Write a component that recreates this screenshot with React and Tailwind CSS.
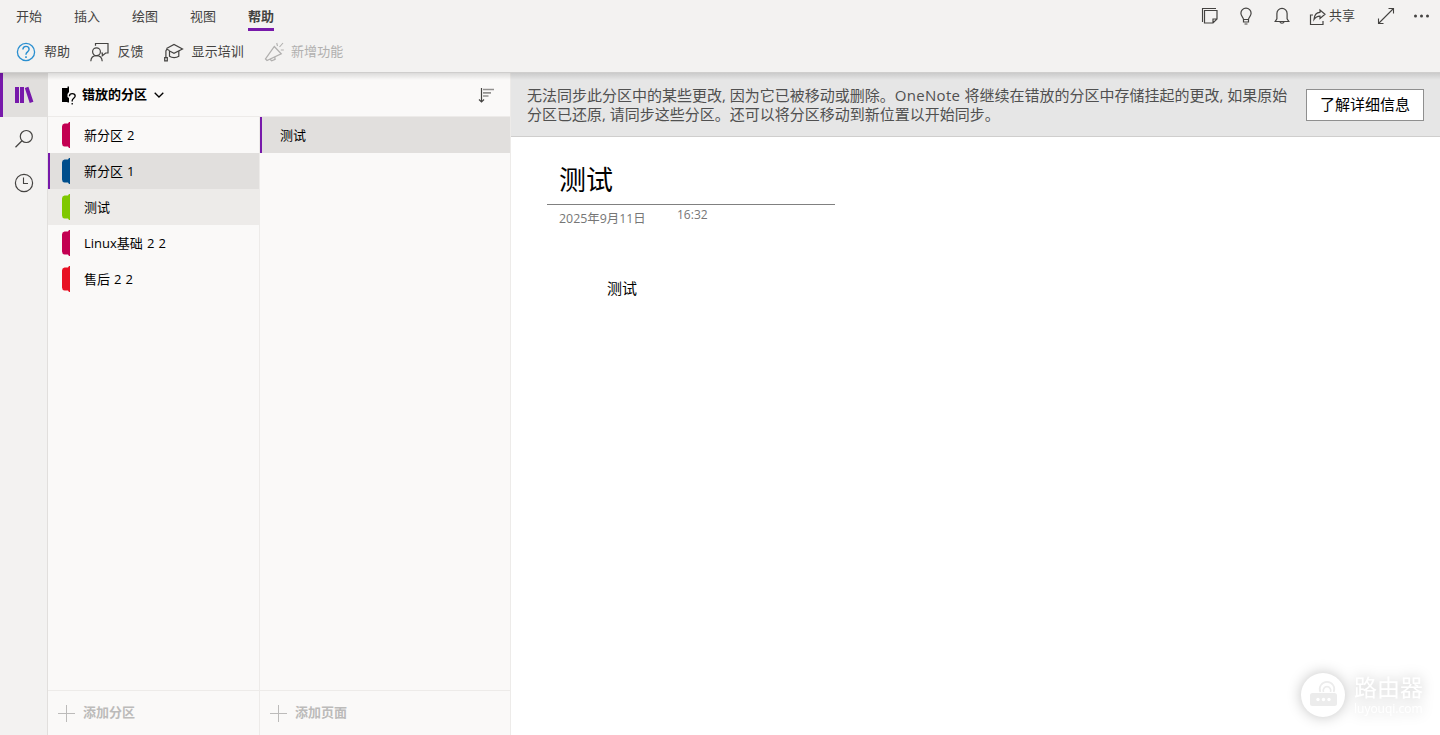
import { useState } from 'react';

const TABS = ['开始', '插入', '绘图', '视图', '帮助'];

const SECTIONS = [
  { name: '新分区 2', color: '#c30052' },
  { name: '新分区 1', color: '#004e8c' },
  { name: '测试', color: '#7fc800' },
  { name: 'Linux基础 2 2', color: '#c30052' },
  { name: '售后 2 2', color: '#e81123' },
];

const PAGES = ['测试'];

function Icon({ w = 20, h = 20, className = '', children }) {
  return (
    <svg
      width={w}
      height={h}
      viewBox={`0 0 ${w} ${h}`}
      fill="none"
      stroke="currentColor"
      strokeWidth="1.1"
      className={`shrink-0 ${className}`}
      aria-hidden="true"
    >
      {children}
    </svg>
  );
}

function HelpIcon() {
  return (
    <Icon className="text-[#2a8fd0]">
      <circle cx="10" cy="10" r="8.6" strokeWidth="1.3" />
      <path d="M6.9 7.6C6.9 5.5 8.2 4.4 10 4.4s3.1 1.200 3.1 2.900c0 2.500-3.100 2.600-3.100 5v.5" strokeWidth="1.4" />
      <path d="M10 14.300v1.700" strokeWidth="1.600" />
    </Icon>
  );
}

function FeedbackIcon() {
  return (
    <Icon>
      <circle cx="6.500" cy="9.800" r="3.900" strokeWidth="1.200" />
      <path d="M.8 19.200c.2-3.300 2.400-5.500 5.700-5.500s5.500 2.200 5.700 5.500" strokeWidth="1.200" />
      <path d="M5.500 3.800V1.500h12.500v9.500h-2.300l-3.400 2.800V11h-1" strokeWidth="1.200" />
    </Icon>
  );
}

function TrainingIcon() {
  return (
    <Icon>
      <path d="M2.500 6.500 10 2.500l8.500 4.500-8.500 4.300-4-2" strokeWidth="1.200" />
      <path d="M5.500 8.500v5.800c2.500 1.700 6.800 1.700 9.300 0V9" strokeWidth="1.200" />
      <path d="M5.500 8.500 2.800 7.300 1.900 9v6M.7 18.900v-3.300h2.600v3.300z" strokeWidth="1.200" />
    </Icon>
  );
}

function WhatsNewIcon() {
  return (
    <Icon>
      <path d="m10.300 4.500 6.900 7.300-14.200 6.700-1.500-1.500z" strokeWidth="1.300" />
      <path d="m6 17.200 1.700 1.600 3.400-1.500-.4-2.400" strokeWidth="1.300" />
      <path d="m13.500 4-.8-3M15.500 5l3.500-4M16.800 8h3" />
    </Icon>
  );
}

function NotebookIcon() {
  return (
    <svg width="20" height="18" viewBox="0 0 20 18" className="text-[#7719aa]" fill="currentColor" aria-hidden="true">
      <path d="M1 1h4v16H1zM6 1h4v16H6zM10.800 2l3.600-1.200 5 15-3.700 1.200z" />
    </svg>
  );
}

function MisplacedIcon() {
  return (
    <svg width="16" height="20" viewBox="0 0 16 20" className="shrink-0" aria-hidden="true">
      <path d="M1 3h5.500V1.500H8V7L6.500 9v3L8 13v4.500H6.500V17H1z" />
      <path
        d="M8.400 11.200C8.400 9.500 9.600 8.600 11.200 8.600s3 1 3 2.500c0 2.100-3 2.300-3 4.500v.9M11.200 17.900v1.500"
        fill="none"
        stroke="#000"
        strokeWidth="1.300"
      />
    </svg>
  );
}

function SectionTab({ color }) {
  return (
    <svg width="8" height="26" viewBox="0 0 8 26" fill={color} className="shrink-0" aria-hidden="true">
      <path d="M7 0h1v26H7l-1-1.500H2.500Q0 24 0 21.500v-17Q0 2 2.500 1.500H6z" />
    </svg>
  );
}

function AddButton({ label }) {
  return (
    <button className="flex h-full items-center gap-2 pl-[10px] text-[13px] font-bold text-[#bcbbba]">
      <Icon w={17} h={17}>
        <path d="M8.500 0v17M0 8.500h17" strokeWidth="1" />
      </Icon>
      {label}
    </button>
  );
}

function Ribbon({ activeTab, onTab }) {
  return (
    <header className="h-[73px] shrink-0 border-b border-[#cfcecd] bg-[#f3f2f1] text-[#444341]">
      <div className="flex h-8 justify-between">
        <nav className="flex gap-8 pl-4">
          {TABS.map((tab) => (
            <button
              key={tab}
              onClick={() => onTab(tab)}
              className={`flex h-[31px] w-[26px] justify-center whitespace-nowrap border-b-3 pt-[6px] text-[13px] leading-5 ${
                tab === activeTab ? 'border-[#7719aa] font-bold' : 'border-transparent'
              }`}
            >
              {tab}
            </button>
          ))}
        </nav>
        <div className="flex items-center pr-[10px]">
          <Icon>
            <path d="M2.500 16V2.500h13.500" />
            <path d="M4.500 4.500h12.500v8.500l-4 4H4.500zM17 13h-4v4" strokeWidth="1.200" />
          </Icon>
          <Icon className="ml-4">
            <path d="M7.500 13.500c0-2.300-2.600-3.200-2.600-6.200a5.100 5.100 0 0 1 10.200 0c0 3-2.600 3.900-2.600 6.200zM7.500 13.500V16h5v-2.500M8.500 18h3" strokeWidth="1.200" />
          </Icon>
          <Icon className="ml-4">
            <path d="M3.200 15.500h13.600l-1.700-2.700V7.500a5.100 5.100 0 0 0-10.200 0v5.300zM8 16c.3 1.600 3.700 1.600 4 0" strokeWidth="1.200" />
          </Icon>
          <button className="ml-4 flex items-center gap-px text-[13px]">
            <Icon>
              <path d="M5 9H2.500v9.500H15V15" strokeWidth="1.200" />
              <path d="M6 13.500C6.300 9 8.500 6.500 12 6.300V4l5 4.300-5 4.200v-2.300c-2.500 0-4.500 1-6 3.300z" strokeWidth="1.200" />
            </Icon>
            共享
          </button>
          <Icon className="ml-[21px]">
            <path d="m2.500 17.500 15-15M12.500 2.500h5v5M2.500 12.500v5h5" />
          </Icon>
          <Icon w={16} h={4} className="ml-[18px]">
            <g fill="currentColor" stroke="none">
              <circle cx="1.500" cy="2" r="1.500" />
              <circle cx="7.500" cy="2" r="1.500" />
              <circle cx="13.500" cy="2" r="1.500" />
            </g>
          </Icon>
        </div>
      </div>
      <div className="flex h-10 items-center pl-4 text-[13px]">
        <button className="flex items-center gap-2">
          <HelpIcon />
          帮助
        </button>
        <button className="ml-5 flex items-center gap-[7.5px]">
          <FeedbackIcon />
          反馈
        </button>
        <button className="ml-5 flex items-center gap-2">
          <TrainingIcon />
          <span className="tracking-[0.1px]">显示培训</span>
        </button>
        <button className="ml-5 flex items-center gap-[7px] text-[#b1b0af]" disabled>
          <WhatsNewIcon />
          <span className="tracking-[0.1px]">新增功能</span>
        </button>
      </div>
    </header>
  );
}

function Rail() {
  return (
    <aside className="flex w-12 shrink-0 flex-col border-r border-[#e1dfdd] bg-[#f3f2f1] text-[#444341]">
      <button className="flex h-11 items-center justify-center border-l-3 border-[#7719aa] bg-[#e1dfdd] pr-[2px]">
        <NotebookIcon />
      </button>
      <button className="flex h-11 items-center justify-center">
        <Icon>
          <circle cx="12.300" cy="7.500" r="6" strokeWidth="1.200" />
          <path d="m8 11.800-6.500 6.500" strokeWidth="1.300" />
        </Icon>
      </button>
      <button className="flex h-11 items-center justify-center">
        <Icon>
          <circle cx="10" cy="10" r="8.600" strokeWidth="1.200" />
          <path d="M9.500 4.500v6h4.500" />
        </Icon>
      </button>
    </aside>
  );
}

function Watermark() {
  return (
    <div className="pointer-events-none absolute right-[17px] bottom-[17px] flex items-center gap-[9px] text-white drop-shadow-[0_0_7px_rgba(0,0,0,0.24)]">
      <svg width="44" height="46" viewBox="0 0 44 46" aria-hidden="true">
        <circle cx="22" cy="23" r="22" fill="#fff" />
        <rect x="9" y="21" width="27" height="13" rx="2.500" fill="#ececec" />
        <path d="M19.300 20a7.300 7.300 0 1 1 13.400 0M22.500 20a3.800 3.800 0 1 1 7 0" fill="none" stroke="#ececec" strokeWidth="1.700" />
        <g fill="#fff">
          <circle cx="17" cy="27.500" r="1.700" />
          <circle cx="22.500" cy="27.500" r="1.700" />
          <circle cx="28" cy="27.500" r="1.700" />
        </g>
      </svg>
      <div>
        <div className="mb-px text-[23px] leading-[26px]">路由器</div>
        <div className="text-[12px] leading-[15px]">luyouqi.com</div>
      </div>
    </div>
  );
}

export default function App() {
  const [activeTab, setActiveTab] = useState('帮助');
  const [section, setSection] = useState(1);
  const [page, setPage] = useState(0);

  return (
    <div className="relative flex h-[735px] w-[1440px] flex-col overflow-hidden bg-white font-['Open_Sans','Noto_Sans_CJK_SC',sans-serif] text-black">
      <Ribbon activeTab={activeTab} onTab={setActiveTab} />

      <div className="relative flex min-h-0 flex-1">
        {/* shadow cast by the ribbon */}
        <div className="pointer-events-none absolute inset-x-0 top-0 h-[7px] bg-linear-to-b from-black/12 to-transparent" />

        <Rail />

        <div className="flex w-[463px] shrink-0 flex-col border-r border-[#edebe9] bg-[#faf9f8]">
          <div className="flex h-11 shrink-0 items-center border-b border-[#edebe9] pl-[13px] pr-[15px]">
            <MisplacedIcon />
            <button className="ml-[5px] flex items-center gap-[7px] text-[13px] font-bold">
              错放的分区
              <Icon w={10} h={6}>
                <path d="m.7.7 4.300 4.300L9.300.7" strokeWidth="1.300" />
              </Icon>
            </button>
            <Icon w={18} h={18} className="ml-auto text-[#444341]">
              <path d="M4.500 2v14M2 13.500l2.500 2.500L7 13.500" strokeWidth="1.200" />
              <path d="M6 3.500h11M6 6.800h8M6 10h5.500" stroke="#92918f" strokeWidth="1.700" />
            </Icon>
          </div>

          <div className="flex min-h-0 flex-1">
            <div className="flex w-[212px] shrink-0 flex-col border-r border-[#edebe9]">
              <div className="flex-1">
                {SECTIONS.map((s, idx) => (
                  <button
                    key={s.name}
                    onClick={() => setSection(idx)}
                    className={`flex h-9 w-full items-center gap-[14px] border-l-2 pl-3 text-[13px] [word-spacing:0.7px] ${
                      idx === section
                        ? 'border-[#7719aa] bg-[#e1dfdd]'
                        : idx === 2
                          ? 'border-[#edebe9] bg-[#edebe9]'
                          : 'border-transparent'
                    }`}
                  >
                    <SectionTab color={s.color} />
                    <span className="pt-px">{s.name}</span>
                  </button>
                ))}
              </div>
              <div className="h-[45px] border-t border-[#edebe9]">
                <AddButton label="添加分区" />
              </div>
            </div>

            <div className="flex flex-1 flex-col">
              <div className="flex-1">
                {PAGES.map((name, idx) => (
                  <button
                    key={name}
                    onClick={() => setPage(idx)}
                    className={`flex h-9 w-full items-center border-l-2 pl-[18px] pt-[2px] text-[13px] ${
                      idx === page ? 'border-[#7719aa] bg-[#e1dfdd]' : 'border-transparent'
                    }`}
                  >
                    {name}
                  </button>
                ))}
              </div>
              <div className="h-[45px] border-t border-[#edebe9]">
                <AddButton label="添加页面" />
              </div>
            </div>
          </div>
        </div>

        <main className="flex min-w-0 flex-1 flex-col">
          <div className="flex h-16 shrink-0 items-center justify-between border-b border-[#cfcecd] bg-[#e6e6e6] px-4">
            <p className="whitespace-nowrap text-[15px] leading-[19px] text-[#505050]">
              无法同步此分区中的某些更改, 因为它已被移动或删除。<span className="tracking-[0.3px]">OneNote </span>
              将继续在错放的分区中存储挂起的更改, 如果原始
              <br />
              分区已还原, 请同步这些分区。还可以将分区移动到新位置以开始同步。
            </p>
            <button className="h-8 w-[118px] border border-[#8f8f8f] bg-white text-[15px]">了解详细信息</button>
          </div>

          <article className="pl-9 pt-[23px]">
            <div className="w-72 border-b border-[#808080] pl-3">
              <h1 className="h-[44px] text-[27px] leading-[40px]">测试</h1>
            </div>
            <div className="flex pl-3 text-[#767676]">
              <span className="w-[118px] pt-[5px] text-[12.4px] leading-[18px]">2025年9月11日</span>
              <span className="text-[12px] leading-5">16:32</span>
            </div>
            <p className="pl-[60px] pt-12 text-[15px] leading-6">测试</p>
          </article>
        </main>
      </div>

      <Watermark />
    </div>
  );
}
